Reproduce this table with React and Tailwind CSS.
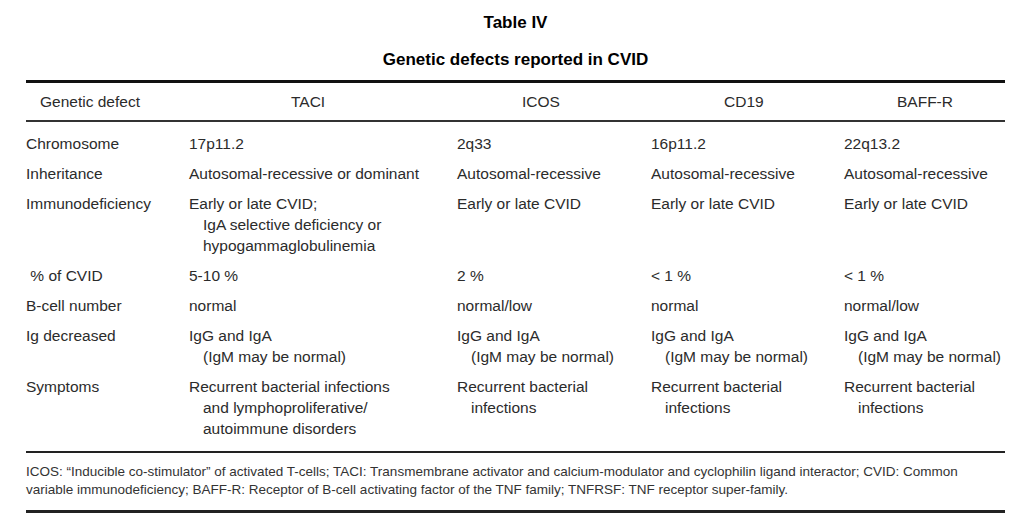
import React from 'react';

const rows = [
  { label: 'Chromosome', cells: [['17p11.2'], ['2q33'], ['16p11.2'], ['22q13.2']] },
  {
    label: 'Inheritance',
    cells: [
      ['Autosomal-recessive or dominant'],
      ['Autosomal-recessive'],
      ['Autosomal-recessive'],
      ['Autosomal-recessive'],
    ],
  },
  {
    label: 'Immunodeficiency',
    cells: [
      ['Early or late CVID;', 'IgA selective deficiency or', 'hypogammaglobulinemia'],
      ['Early or late CVID'],
      ['Early or late CVID'],
      ['Early or late CVID'],
    ],
  },
  { label: ' % of CVID', cells: [['5-10 %'], ['2 %'], ['< 1 %'], ['< 1 %']] },
  { label: 'B-cell number', cells: [['normal'], ['normal/low'], ['normal'], ['normal/low']] },
  {
    label: 'Ig decreased',
    cells: [
      ['IgG and IgA', '(IgM may be normal)'],
      ['IgG and IgA', '(IgM may be normal)'],
      ['IgG and IgA', '(IgM may be normal)'],
      ['IgG and IgA', '(IgM may be normal)'],
    ],
  },
  {
    label: 'Symptoms',
    cells: [
      ['Recurrent bacterial infections', 'and lymphoproliferative/', 'autoimmune disorders'],
      ['Recurrent bacterial', 'infections'],
      ['Recurrent bacterial', 'infections'],
      ['Recurrent bacterial', 'infections'],
    ],
  },
];

const headers = ['TACI', 'ICOS', 'CD19', 'BAFF-R'];

const gridCols = 'grid grid-cols-[163px_268px_194px_193px_161px]';

const Cell = ({ lines }) => (
  <div>
    {lines.map((line, i) => (
      <div key={i} className={i > 0 ? 'pl-[14px]' : ''}>
        {line}
      </div>
    ))}
  </div>
);

const App = () => {
  return (
    <div
      className="w-[1024px] h-[530px] bg-white text-[#2b2b2b] overflow-hidden"
      style={{ fontFamily: '"Liberation Sans", Arial, sans-serif' }}
    >
      <div className="ml-[26px] w-[979px]">
        {/* Title */}
        <div className="pt-[13px] text-center font-bold text-[17px] leading-[20px] text-black">
          <div>Table IV</div>
          <div className="mt-[17px]">Genetic defects reported in CVID</div>
        </div>

        {/* Table */}
        <div className="mt-[10px] border-t-[3px] border-[#111]">
          <div className={`${gridCols} h-[39px] items-center text-[15.5px] border-b-2 border-[#333]`}>
            <div className="pl-[14px]">Genetic defect</div>
            <div className="pl-[102px]">{headers[0]}</div>
            <div className="pl-[65px]">{headers[1]}</div>
            <div className="pl-[73px]">{headers[2]}</div>
            <div className="pl-[53px]">{headers[3]}</div>
          </div>

          <div className="pt-[11px] pb-[3px] text-[15.5px] leading-[21px]">
            {rows.map((row) => (
              <div key={row.label} className={`${gridCols} pb-[9px]`}>
                <div className="whitespace-pre">{row.label}</div>
                {row.cells.map((lines, i) => (
                  <Cell key={i} lines={lines} />
                ))}
              </div>
            ))}
          </div>
        </div>

        {/* Footnote */}
        <div className="border-t-2 border-[#222] border-b-[3px] pt-[10px] pb-[11px] text-[13.5px] leading-[18px] text-[#333]">
          <p>
            ICOS: “Inducible co-stimulator” of activated T-cells; TACI: Transmembrane activator and
            calcium-modulator and cyclophilin ligand interactor; CVID: Common
          </p>
          <p>
            variable immunodeficiency; BAFF-R: Receptor of B-cell activating factor of the TNF family;
            TNFRSF: TNF receptor super-family.
          </p>
        </div>
      </div>
    </div>
  );
};

export default App;
